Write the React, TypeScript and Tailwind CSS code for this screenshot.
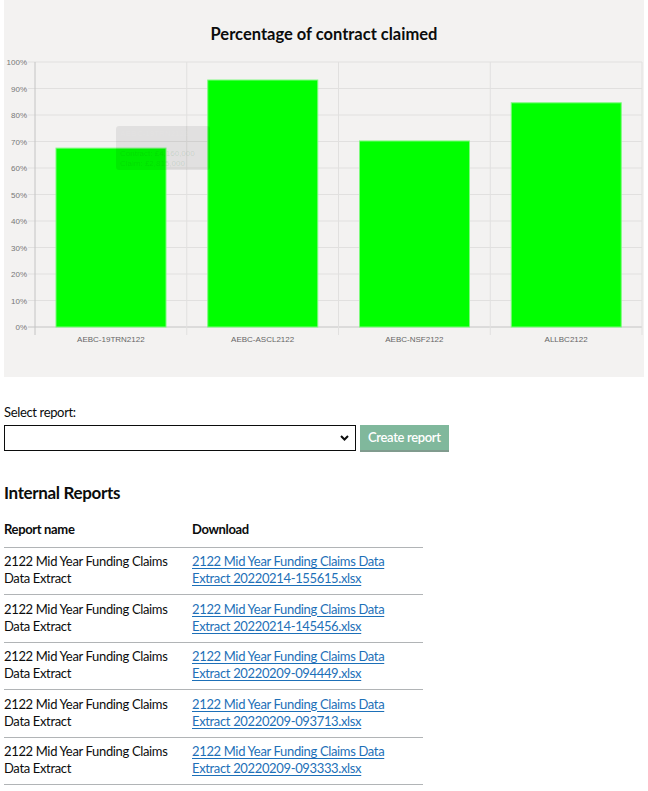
import React from "react";

const bars = [
  { label: "AEBC-19TRN2122", value: 67.5 },
  { label: "AEBC-ASCL2122", value: 93.2 },
  { label: "AEBC-NSF2122", value: 70.2 },
  { label: "ALLBC2122", value: 84.6 },
];

const reports = [
  "2122 Mid Year Funding Claims Data Extract 20220214-155615.xlsx",
  "2122 Mid Year Funding Claims Data Extract 20220214-145456.xlsx",
  "2122 Mid Year Funding Claims Data Extract 20220209-094449.xlsx",
  "2122 Mid Year Funding Claims Data Extract 20220209-093713.xlsx",
  "2122 Mid Year Funding Claims Data Extract 20220209-093333.xlsx",
];

// plot geometry, in page coordinates (viewBox matches the page)
const X0 = 35;
const X1 = 642;
const Y0 = 327;
const Y100 = 62;
const COL = (X1 - X0) / 4;

function ClaimChart() {
  const ticks = [0, 10, 20, 30, 40, 50, 60, 70, 80, 90, 100];
  const yOf = (v: number) => Y0 - ((Y0 - Y100) * v) / 100;

  return (
    <svg
      className="block tracking-normal"
      width={640}
      height={327}
      viewBox="4 50 640 327"
      style={{ fontFamily: "'Liberation Sans', Arial, sans-serif" }}
    >
      {ticks.map((t) => (
        <g key={t}>
          <line x1={28} x2={X1} y1={yOf(t)} y2={yOf(t)} stroke={t === 0 ? "#c4c4c4" : "#e1e0df"} strokeWidth={1} />
          <text x={27} y={yOf(t) + 3} textAnchor="end" fontSize={8} fill="#777">
            {t}%
          </text>
        </g>
      ))}
      {[1, 2, 3, 4].map((i) => (
        <line key={i} x1={X0 + COL * i} x2={X0 + COL * i} y1={Y100} y2={335} stroke="#e1e0df" strokeWidth={1} />
      ))}
      <line x1={X0} x2={X0} y1={Y100} y2={335} stroke="#c4c4c4" strokeWidth={1} />

      {bars.map((b, i) => {
        const x = X0 + COL * i + 21;
        const top = yOf(b.value);
        return (
          <g key={b.label}>
            <rect x={x} y={top} width={110} height={Y0 - top} fill="#00ff00" stroke="#7dfa7d" strokeWidth={1} />
            <text x={X0 + COL * i + COL / 2} y={342} textAnchor="middle" fontSize={8} fill="#666">
              {b.label}
            </text>
          </g>
        );
      })}

      {/* tooltip, fading out */}
      <g>
        <rect x={116} y={126} width={94} height={44} rx={3} fill="rgba(0,0,0,0.07)" />
        <text x={120} y={136} fontSize={8} fill="rgba(255,255,255,0.08)" fontWeight="bold">
          AEBC-19TRN2122
        </text>
        <text x={120} y={146} fontSize={8} fill="rgba(255,255,255,0.08)">
          67.5%
        </text>
        <text x={120} y={156} fontSize={8} fill="rgba(0,100,0,0.12)">
          Contract: £4,160,000
        </text>
        <text x={120} y={166} fontSize={8} fill="rgba(0,100,0,0.12)">
          Claim: £2,815,000
        </text>
      </g>
    </svg>
  );
}

export default function App() {
  return (
    <div
      className="min-h-[791px] bg-white px-[4px] text-[#0b0c0c] tracking-[-0.35px]"
      style={{ fontFamily: "Lato, 'Noto Sans', Arial, sans-serif" }}
    >
      <section className="w-[640px] h-[377px] bg-[#f3f2f1]">
        <h2 className="h-[50px] pt-[24px] text-center text-[16.5px] leading-[20px] font-bold tracking-normal">
          Percentage of contract claimed
        </h2>
        <ClaimChart />
      </section>

      <form className="mt-[27px]" onSubmit={(e) => e.preventDefault()}>
        <label htmlFor="report" className="block text-[13px] leading-[17px]">
          Select report:
        </label>
        <div className="mt-[4px] flex items-start gap-[4px]">
          <div className="relative">
            <select
              id="report"
              className="block w-[352px] h-[26px] appearance-none border border-[#0b0c0c] bg-white px-2 text-[13px]"
            >
              <option></option>
            </select>
            <svg
              className="pointer-events-none absolute right-[7px] top-[10px]"
              width="9"
              height="6"
              viewBox="0 0 9 6"
            >
              <path d="M1 1l3.5 3.5L8 1" fill="none" stroke="#0b0c0c" strokeWidth="2" />
            </svg>
          </div>
          <button
            type="submit"
            className="h-[25px] px-[8px] bg-[#80b89c] text-white text-[13px] leading-[25px] font-semibold shadow-[0_2px_0_#809b8e]"
          >
            Create report
          </button>
        </div>
      </form>

      <h2 className="mt-[32px] text-[17px] leading-[20px] font-bold">Internal Reports</h2>

      <table className="mt-[18px] w-[419px] border-collapse text-[13px] leading-[17px]">
        <thead>
          <tr className="border-b border-[#b1b4b6]">
            <th className="w-[188px] pr-4 pb-[8.5px] text-left font-bold">Report name</th>
            <th className="pb-[8.5px] text-left font-bold">Download</th>
          </tr>
        </thead>
        <tbody>
          {reports.map((file) => (
            <tr key={file} className="border-b border-[#b1b4b6] align-top">
              <td className="pr-5 pt-[5.5px] pb-[7px]">2122 Mid Year Funding Claims Data Extract</td>
              <td className="pr-5 pt-[5.5px] pb-[7px]">
                <a href="#" className="text-[#1d70b8] underline underline-offset-[2px]">
                  {file}
                </a>
              </td>
            </tr>
          ))}
        </tbody>
      </table>
    </div>
  );
}
